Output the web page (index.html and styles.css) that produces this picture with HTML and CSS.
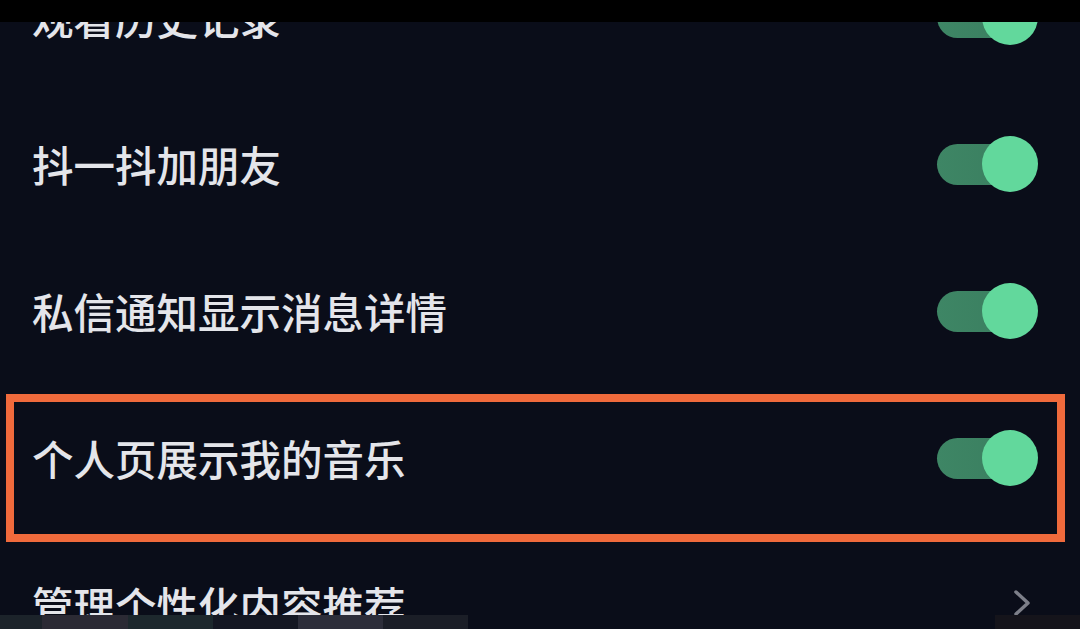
FILE: index.html
```html
<!DOCTYPE html>
<html lang="zh-CN">
<head>
<meta charset="utf-8">
<title>设置</title>
<link rel="stylesheet" href="styles.css">
</head>
<body>
<div class="screen">
  <div class="list">
    <div class="row">
      <span class="label">观看历史记录</span>
      <div class="toggle"><div class="track"></div><div class="knob"></div></div>
    </div>
    <div class="row">
      <span class="label">抖一抖加朋友</span>
      <div class="toggle"><div class="track"></div><div class="knob"></div></div>
    </div>
    <div class="row">
      <span class="label">私信通知显示消息详情</span>
      <div class="toggle"><div class="track"></div><div class="knob"></div></div>
    </div>
    <div class="row">
      <span class="label">个人页展示我的音乐</span>
      <div class="toggle"><div class="track"></div><div class="knob"></div></div>
    </div>
    <div class="row">
      <span class="label">管理个性化内容推荐</span>
      <svg class="chevron" width="20" height="28" viewBox="0 0 20 28"><polyline points="4,3 16,14 4,25" fill="none" stroke="#7d7f89" stroke-width="3.5" stroke-linecap="round" stroke-linejoin="round"/></svg>
    </div>
  </div>
  <div class="statusbar"></div>
  <div class="highlight"></div>
  <div class="bottomstrip">
    <span class="seg s1"></span>
    <span class="seg s2"></span>
    <span class="seg s3"></span>
    <span class="seg s4"></span>
    <span class="seg s5"></span>
    <span class="seg s6"></span>
    <span class="seg fill"></span>
    <span class="seg s7"></span>
  </div>
</div>
</body>
</html>
```

FILE: styles.css
```css
html, body {
  margin: 0;
  padding: 0;
  background: #0a0d19;
}

.screen {
  position: relative;
  width: 1080px;
  height: 629px;
  overflow: hidden;
  background: #0a0d19;
  font-family: "Noto Sans CJK SC", "Noto Sans", sans-serif;
}

.list {
  display: flex;
  flex-direction: column;
  margin-top: -57px;
}

.row {
  height: 147px;
  display: flex;
  align-items: center;
  justify-content: space-between;
  padding: 0 42px 0 32px;
}

.label {
  color: #e4e5ea;
  font-size: 41.5px;
  line-height: 1;
  font-weight: 500;
  position: relative;
  top: 1px;
}

.toggle {
  position: relative;
  width: 101px;
  height: 56px;
}

.track {
  position: absolute;
  left: 0;
  top: 8px;
  width: 88px;
  height: 41px;
  border-radius: 21px;
  background: linear-gradient(90deg, #3e8665, #3a7d5f);
}

.knob {
  position: absolute;
  right: 0;
  top: 0;
  width: 56px;
  height: 56px;
  border-radius: 50%;
  background: #62d89c;
}

.chevron {
  margin-right: 6px;
  position: relative;
  top: -2px;
}

.statusbar {
  position: absolute;
  left: 0;
  top: 0;
  width: 100%;
  height: 22px;
  background: #000;
}

.highlight {
  position: absolute;
  left: 6px;
  top: 394px;
  width: 1059px;
  height: 148px;
  box-sizing: border-box;
  border: 8px solid #f06a3c;
}

.bottomstrip {
  position: absolute;
  left: 0;
  bottom: 0;
  width: 100%;
  height: 14px;
  display: flex;
}

.seg { display: block; height: 100%; }
.s1 { width: 42px; background: #1c232a; }
.s2 { width: 86px; background: #2b2a34; }
.s3 { width: 85px; background: #1d282d; }
.s4 { width: 85px; background: #141722; }
.s5 { width: 85px; background: #2d2e3a; }
.s6 { width: 85px; background: #1b1e27; }
.fill { flex: 1; background: #0a0d19; }
.s7 { width: 85px; background: #15141b; }
```
